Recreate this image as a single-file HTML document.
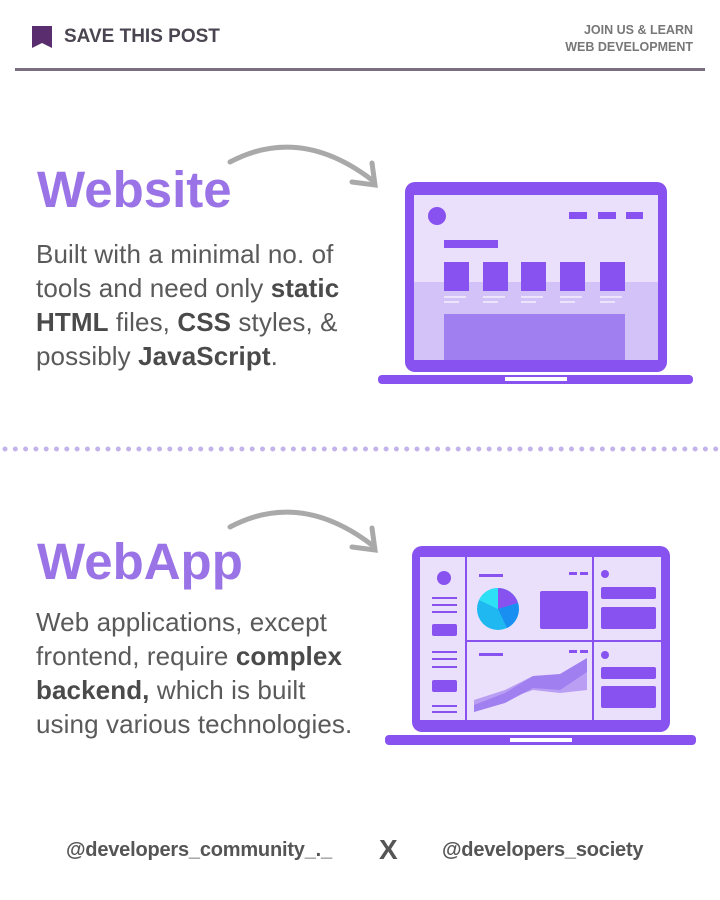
<!DOCTYPE html>
<html><head><meta charset="utf-8"><style>
*{margin:0;padding:0;box-sizing:border-box}
body{width:720px;height:900px;background:#fff;position:relative;overflow:hidden;font-family:"Liberation Sans",sans-serif}
.a{position:absolute}
.h1{font-weight:bold;font-size:51px;color:#9a74e6;letter-spacing:0px}
.body{font-size:26px;color:#5a5a5a;line-height:34px;letter-spacing:0.1px}
.body b{color:#4a4a4a}
.ft{font-weight:bold;font-size:20px;color:#555;letter-spacing:-0.2px}
</style></head><body>
<svg class="a" style="left:32px;top:26px" width="20" height="24" viewBox="0 0 20 24"><path d="M0 0H20V22L10 17L0 22Z" fill="#5a2d6e"/></svg>
<div class="a" style="left:64px;top:26px;font-weight:bold;font-size:19px;color:#4a4550">SAVE THIS POST</div>
<div class="a" style="right:27px;top:22px;font-weight:bold;font-size:12.5px;color:#777;text-align:right;line-height:17px">JOIN US &amp; LEARN<br>WEB DEVELOPMENT</div>
<div class="a" style="left:15px;top:68px;width:690px;height:3px;background:#7a6f80"></div>

<svg class="a" style="left:0;top:0" width="720" height="900">
<g fill="none" stroke="#a9a9a9" stroke-width="5" stroke-linecap="round">
<path d="M230 162 Q300 125 372 180"/><path d="M352 182 L375 185 L372 163"/>
<path d="M230 527 Q300 490 372 545"/><path d="M352 547 L375 550 L372 528"/>
</g>
<rect x="405" y="182" width="262" height="190" rx="10" fill="#8752f0"/>
<rect x="414" y="195" width="244" height="87" fill="#ebe0fc"/>
<rect x="414" y="282" width="244" height="78" fill="#d3c2f7"/>
<circle cx="437" cy="216" r="9" fill="#8752f0"/>
<g fill="#8752f0"><rect x="569" y="212" width="18" height="7"/><rect x="598" y="212" width="18" height="7"/><rect x="626" y="212" width="17" height="7"/>
<rect x="444" y="240" width="54" height="8"/>
<rect x="444" y="262" width="25" height="29"/><rect x="483" y="262" width="25" height="29"/><rect x="521" y="262" width="25" height="29"/><rect x="560" y="262" width="25" height="29"/><rect x="600" y="262" width="25" height="29"/></g>
<g fill="#ece4fb"><rect x="444" y="296" width="22" height="2"/><rect x="483" y="296" width="22" height="2"/><rect x="521" y="296" width="22" height="2"/><rect x="560" y="296" width="22" height="2"/><rect x="600" y="296" width="22" height="2"/>
<rect x="444" y="301" width="15" height="2"/><rect x="483" y="301" width="15" height="2"/><rect x="521" y="301" width="15" height="2"/><rect x="560" y="301" width="15" height="2"/><rect x="600" y="301" width="15" height="2"/></g>
<rect x="444" y="314" width="181" height="46" fill="#a07ff0"/>
<rect x="378" y="375" width="315" height="9" rx="4" fill="#8752f0"/>
<rect x="505" y="377" width="62" height="4" fill="#fff"/>
<rect x="412" y="546" width="258" height="186" rx="10" fill="#8752f0"/>
<rect x="420" y="557" width="241" height="163" fill="#ebe0fc"/>
<rect x="465" y="557" width="2" height="163" fill="#8752f0"/>
<rect x="592" y="557" width="2" height="163" fill="#8752f0"/>
<rect x="466" y="640" width="195" height="2" fill="#8752f0"/>
<g fill="#8752f0">
<circle cx="444" cy="578" r="7"/>
<rect x="432" y="597" width="25" height="2"/><rect x="432" y="604" width="25" height="2"/><rect x="432" y="611" width="25" height="2"/>
<rect x="432" y="624" width="25" height="12" rx="2"/>
<rect x="432" y="651" width="25" height="2"/><rect x="432" y="658" width="25" height="2"/><rect x="432" y="666" width="25" height="2"/>
<rect x="432" y="680" width="25" height="12" rx="2"/>
<rect x="432" y="705" width="25" height="2"/><rect x="432" y="711" width="25" height="2"/>
<rect x="479" y="574" width="24" height="3"/><rect x="569" y="572" width="8" height="3"/><rect x="580" y="572" width="8" height="3"/>
<rect x="540" y="591" width="48" height="38" rx="2"/>
<circle cx="605" cy="574" r="4"/><rect x="601" y="587" width="55" height="12" rx="2"/><rect x="601" y="607" width="55" height="22" rx="2"/>
<rect x="479" y="653" width="24" height="3"/><rect x="569" y="650" width="8" height="3"/><rect x="580" y="650" width="8" height="3"/>
<circle cx="605" cy="655" r="4"/><rect x="601" y="667" width="55" height="12" rx="2"/><rect x="601" y="686" width="55" height="22" rx="2"/>
</g>
<circle cx="498" cy="609" r="21" fill="#1fb8f0"/>
<path d="M498 609 L498 588 A21 21 0 0 1 518 603 Z" fill="#8752f0"/>
<path d="M498 609 L518 603 A21 21 0 0 1 507 628 Z" fill="#1a8ff2"/>
<path d="M498 609 L479 600 A21 21 0 0 1 498 588 Z" fill="#2ee0f5"/>
<path d="M474 700 L505 690 L533 676 L560 678 L587 658 L587 690 L560 693 L533 690 L505 700 L474 712Z" fill="#b99ef3"/>
<path d="M474 705 L505 693 L533 676 L560 674 L587 658 L587 672 L560 690 L533 688 L505 703 L474 712Z" fill="#a07ff0"/>
<rect x="385" y="735" width="311" height="10" rx="4" fill="#8752f0"/>
<rect x="510" y="738" width="62" height="4" fill="#fff"/>
<line x1="5" y1="449" x2="718" y2="449" stroke="#c3b3ea" stroke-width="5" stroke-linecap="round" stroke-dasharray="0 10.3"/>
</svg>

<div class="a h1" style="left:37px;top:160px">Website</div>
<div class="a body" style="left:36px;top:237px">Built with a minimal no. of<br>tools and need only <b>static</b><br><b>HTML</b> files, <b>CSS</b> styles, &amp;<br>possibly <b>JavaScript</b>.</div>
<div class="a h1" style="left:37px;top:532px">WebApp</div>
<div class="a body" style="left:36px;top:605px">Web applications, except<br>frontend, require <b>complex</b><br><b>backend,</b> which is built<br>using various technologies.</div>

<div class="a ft" style="left:66px;top:839px">@developers_community_._</div>
<div class="a" style="left:379px;top:834px;font-weight:bold;font-size:28px;color:#555">X</div>
<div class="a ft" style="left:442px;top:839px">@developers_society</div>
</body></html>
